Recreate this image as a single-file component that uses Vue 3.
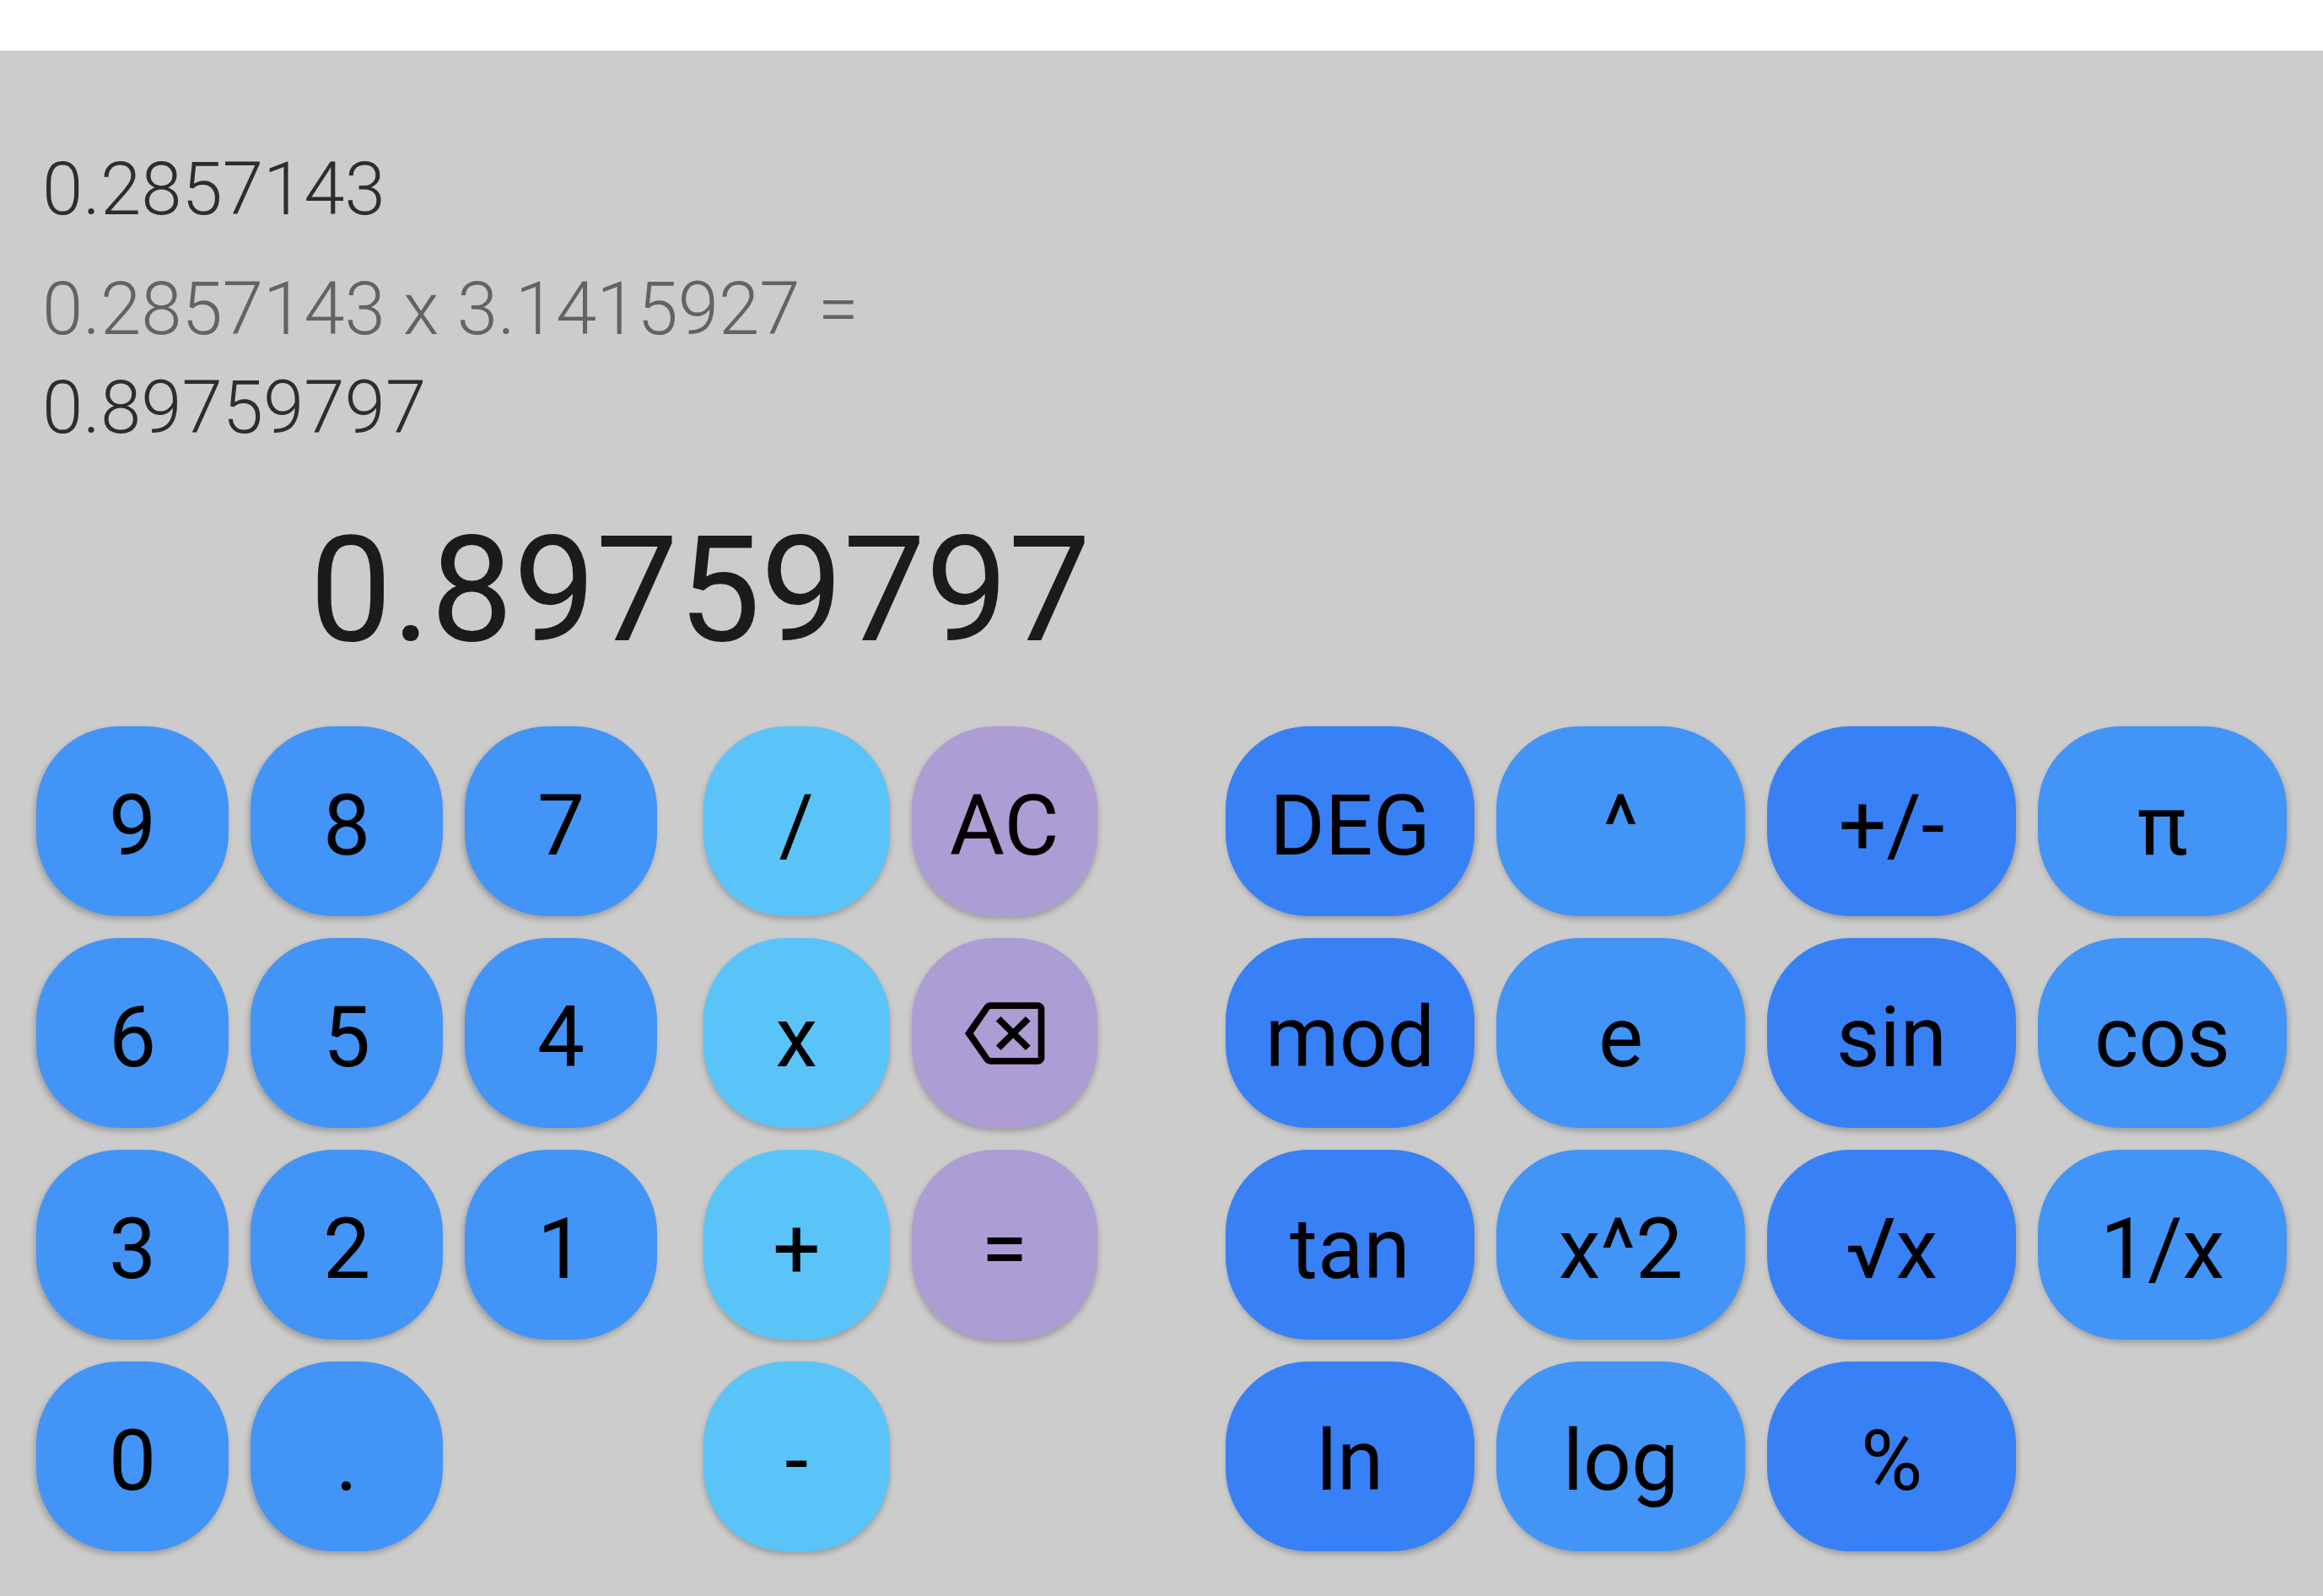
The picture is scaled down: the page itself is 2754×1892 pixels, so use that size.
<script setup>
const history = [
  { result: '0.2857143' },
  { expression: '0.2857143 x 3.1415927 =', result: '0.89759797' },
]
const current = '0.89759797'

const pads = [
  {
    name: 'digits',
    keys: ['9', '8', '7', '6', '5', '4', '3', '2', '1', '0', '.'].map((label) => ({ label, tone: 'mid' })),
  },
  {
    name: 'operators',
    keys: [
      { label: '/', tone: 'sky' },
      { label: 'AC', tone: 'lilac' },
      { label: 'x', tone: 'sky' },
      { label: 'Backspace', tone: 'lilac', icon: true },
      { label: '+', tone: 'sky' },
      { label: '=', tone: 'lilac' },
      { label: '-', tone: 'sky' },
    ],
  },
  {
    name: 'functions',
    keys: ['DEG', '^', '+/-', 'π', 'mod', 'e', 'sin', 'cos', 'tan', 'x^2', '√x', '1/x', 'ln', 'log', '%'].map(
      (label, i) => ({ label, tone: i % 2 ? 'mid' : 'deep' }),
    ),
  },
]
</script>

<template>
  <div class="screen">
    <header class="status-bar"></header>
    <main class="calculator">
      <section class="display">
        <ol class="history">
          <li v-for="(entry, i) in history" :key="i" class="entry">
            <p v-if="entry.expression" class="expression">{{ entry.expression }}</p>
            <p class="result">{{ entry.result }}</p>
          </li>
        </ol>
        <output class="current">{{ current }}</output>
      </section>
      <section class="keypad">
        <div v-for="pad in pads" :key="pad.name" class="pad" :class="pad.name">
          <button
            v-for="key in pad.keys"
            :key="key.label"
            type="button"
            class="key"
            :class="[key.tone, { 'icon-key': key.icon }]"
            :aria-label="key.icon ? key.label : undefined"
          >
            <svg v-if="key.icon" class="icon" viewBox="0 0 24 24" aria-hidden="true">
              <path
                fill-rule="evenodd"
                d="M21.7 3H7.9c-.7 0-1.35.35-1.8.95L.45 12l5.65 8.05c.45.6 1.1.95 1.8.95h13.8c1.05 0 1.9-.9 1.9-2V5c0-1.1-.85-2-1.9-2zm0 16.1H7.75L2.9 12l4.85-7.1H21.7v14.2zM10.9 16.9l3.6-3.55 3.6 3.55 1.4-1.35L15.85 12l3.65-3.55-1.4-1.35-3.6 3.55-3.6-3.55-1.4 1.35L13.15 12 9.5 15.55z"
              />
            </svg>
            <template v-else>{{ key.label }}</template>
          </button>
        </div>
      </section>
    </main>
  </div>
</template>

<style>
body {
  margin: 0;
  background: #cccccc;
}
</style>

<style scoped>
.screen {
  display: flex;
  flex-direction: column;
  min-height: 100vh;
  background: #cccccc;
  font-family: Roboto, 'Liberation Sans', sans-serif;
}

.status-bar {
  height: 60px;
  background: #ffffff;
}

.calculator {
  flex: 1;
  display: flex;
  flex-direction: column;
  justify-content: space-between;
  padding: 106px 43px 53px;
}

.display {
  width: 47%;
}

.history {
  display: flex;
  flex-direction: column;
  gap: 25px;
  margin: 0;
  padding: 0 0 0 7px;
  list-style: none;
  font-size: 87px;
  font-weight: 300;
  line-height: 117px;
  color: #2d2d2d;
}

.history p {
  margin: 0;
  white-space: nowrap;
}

.history .expression {
  color: #636363;
}

.current {
  display: block;
  margin-top: 55px;
  padding-right: 4px;
  font-size: 174px;
  line-height: 206px;
  text-align: right;
  color: #1b1b1b;
}

.keypad {
  display: flex;
  align-items: flex-start;
}

.pad {
  display: grid;
  gap: 26px;
  grid-auto-rows: 225px;
  min-width: 0;
}

.digits {
  --shade-x: -2px;
  flex: 736 1 0;
  grid-template-columns: repeat(3, minmax(0, 1fr));
}

.operators {
  --shade-x: 0px;
  flex: 467 1 0;
  grid-template-columns: repeat(2, minmax(0, 1fr));
  margin: 0 152px 0 55px;
}

.functions {
  --shade-x: 2px;
  flex: 1258 1 0;
  grid-template-columns: repeat(4, minmax(0, 1fr));
}

.key {
  display: flex;
  align-items: center;
  justify-content: center;
  padding: 10px 0 0;
  border: 0;
  border-radius: 98px;
  font: inherit;
  font-size: 100px;
  line-height: 117px;
  color: #000000;
  box-shadow: var(--shade-x) 4px 7px rgba(0, 0, 0, 0.24);
  cursor: pointer;
}

.icon-key {
  padding: 0;
}

.mid {
  background: #4294f7;
}

.deep {
  background: #3880f6;
}

.sky {
  background: #5ac4f9;
}

.lilac {
  background: #ac9dd5;
}

.icon {
  width: 98px;
  height: 98px;
}
</style>
